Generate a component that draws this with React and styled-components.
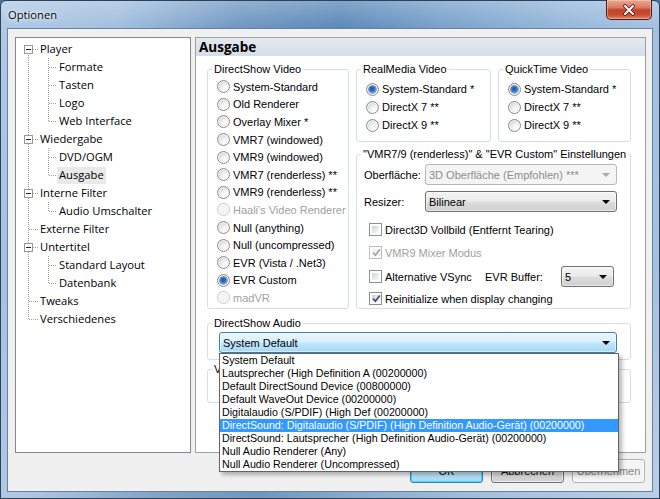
import React from "react";
import styled, { createGlobalStyle } from "styled-components";

const UI_FONT = `"Open Sans", "Noto Sans", sans-serif`;
const DLG_FONT = `"Liberation Sans", Arial, sans-serif`;

const GlobalStyle = createGlobalStyle`
  html, body {
    margin: 0;
    padding: 0;
  }
  body {
    width: 660px;
    height: 499px;
    overflow: hidden;
    background: #4f7298;
    font-family: ${DLG_FONT};
    font-size: 11px;
    color: #000;
  }
`;

const Window = styled.div`
  box-sizing: border-box;
  width: 660px;
  height: 499px;
  display: flex;
  flex-direction: column;
  padding: 0 6px 6px 6px;
  border: 1px solid #2c425c;
  border-radius: 6px 6px 0 0;
  background:
    linear-gradient(180deg, rgba(255, 255, 255, 0.28) 0, rgba(255, 255, 255, 0.05) 27px, rgba(255, 255, 255, 0) 55%, rgba(255, 255, 255, 0.16) 100%),
    linear-gradient(100deg, #abc7e4 0%, #9dbcdd 16%, #6993c0 32%, #5283b5 46%, #729dc9 60%, #94b6da 78%, #abc6e3 100%);
`;

const TitleBar = styled.div`
  height: 27px;
  display: flex;
  align-items: flex-start;
  justify-content: space-between;
`;

const Title = styled.span`
  margin: 6px 0 0 1px;
  font-family: ${UI_FONT};
  font-size: 11.2px;
  line-height: 16px;
  color: #000;
  text-shadow: 0 0 5px rgba(255, 255, 255, 0.95), 0 0 2px rgba(255, 255, 255, 0.9);
`;

const CloseButton = styled.div`
  box-sizing: border-box;
  width: 46px;
  height: 20px;
  margin: -1px 1px 0 0;
  display: flex;
  align-items: center;
  justify-content: center;
  border: 1px solid #4a1d16;
  border-top: none;
  border-radius: 0 0 5px 5px;
  background: linear-gradient(180deg, #e9a895 0%, #d87a62 40%, #c4442a 52%, #c5482c 75%, #df8266 100%);
  box-shadow: inset 0 0 0 1px rgba(255, 220, 200, 0.45);
`;

const Client = styled.div`
  flex: 1;
  display: flex;
  flex-direction: column;
  padding: 8px 6px 8px 7px;
  background: #f0f0f0;
  border: 1px solid #6a829e;
`;

const Body = styled.div`
  height: 416px;
  display: flex;
  gap: 4px;
`;

const Tree = styled.div`
  box-sizing: border-box;
  width: 176px;
  padding-top: 2px;
  border: 1px solid #828790;
  background: #fff;
  font-family: ${UI_FONT};
  font-size: 11.2px;
`;

const TreeRow = styled.div`
  height: 18px;
  display: flex;
  align-items: center;
`;

const TreeLabel = styled.span`
  height: 17px;
  line-height: 16px;
  padding: 0 2px;
  white-space: nowrap;
  background: ${(p) => (p.$selected ? "#e9e9e9" : "transparent")};
`;

const Panel = styled.div`
  box-sizing: border-box;
  flex: 1;
  display: flex;
  flex-direction: column;
  border: 1px solid #a0a0a0;
  background: #fff;
`;

const PageHeader = styled.div`
  height: 18px;
  padding-left: 3px;
  font-family: ${UI_FONT};
  font-weight: 700;
  font-size: 13.5px;
  line-height: 18px;
  background: linear-gradient(180deg, #e3e9f0 0%, #d5dee8 100%);
`;

const PageContent = styled.div`
  padding: 7px 14px 0 11px;
`;

const VideoGrid = styled.div`
  display: grid;
  grid-template-columns: 142px 135px 133px;
  grid-template-rows: 79px 161px;
  column-gap: 7px;
  row-gap: 6px;
`;

const Group = styled.fieldset`
  box-sizing: border-box;
  min-width: 0;
  margin: ${(p) => p.$mt || 0}px 0 0 0;
  padding: 0;
  height: ${(p) => (p.$h ? `${p.$h}px` : "auto")};
  grid-column: ${(p) => p.$col || "auto"};
  grid-row: ${(p) => p.$row || "auto"};
  border: 1px solid #d5dfe5;
  border-radius: 3px;
`;

const Legend = styled.legend`
  margin-left: 4px;
  padding: 0 2px;
  line-height: 13px;
  color: #000;
  white-space: nowrap;
`;

const RadioList = styled.div`
  display: flex;
  flex-direction: column;
  padding: ${(p) => p.$pt}px 0 0 9px;
`;

const Option = styled.div`
  height: ${(p) => p.$h}px;
  display: flex;
  align-items: center;
  gap: ${(p) => p.$gap || 3}px;
  white-space: nowrap;
  color: ${(p) => (p.$disabled ? "#a0a0a0" : "#000")};
`;

const RadioMark = styled.span`
  position: relative;
  flex: none;
  box-sizing: border-box;
  width: 13px;
  height: 13px;
  border-radius: 50%;
  border: 1px solid ${(p) => (p.$disabled ? "#c8c8c8" : "#8c8c8c")};
  background: ${(p) =>
    p.$disabled
      ? "#f4f4f4"
      : "radial-gradient(circle at 65% 70%, #ffffff 0, #f3f3f3 30%, #d6d6d6 75%, #c8c8c8 100%)"};
  box-shadow: inset 0 0 0 1px rgba(255, 255, 255, 0.7);

  &::after {
    content: "";
    display: ${(p) => (p.$checked ? "block" : "none")};
    position: absolute;
    left: 2px;
    top: 2px;
    width: 7px;
    height: 7px;
    border-radius: 50%;
    background: radial-gradient(circle at 45% 40%, #24549e 0, #2b68bf 35%, #5aa1e6 72%, #a3d0f6 100%);
    box-shadow: 0 0 0 0.5px #2a4f86;
  }
`;

const CheckMark = styled.span`
  flex: none;
  box-sizing: border-box;
  width: 13px;
  height: 13px;
  padding: 2px;
  border: 1px solid ${(p) => (p.$disabled ? "#bdbdbd" : "#8e8f8f")};
  background: #fff;
  display: flex;
`;

const CheckInner = styled.span`
  flex: 1;
  display: flex;
  align-items: center;
  justify-content: center;
  background: ${(p) =>
    p.$disabled ? "#f2f2f2" : "linear-gradient(135deg, #cdd1d6 0%, #e9eaec 55%, #f7f7f7 100%)"};
`;

const VmrBody = styled.div`
  display: flex;
  flex-direction: column;
  padding-left: 7px;
`;

const FieldRow = styled.div`
  margin-top: ${(p) => p.$mt}px;
  height: 21px;
  display: flex;
  align-items: center;
`;

const FieldLabel = styled.span`
  width: ${(p) => p.$w}px;
  flex: none;
  white-space: nowrap;
`;

const CheckRow = styled.div`
  margin: ${(p) => p.$mt}px 0 0 5px;
  height: 17px;
  display: flex;
  align-items: center;
  gap: 3px;
  white-space: nowrap;
  color: ${(p) => (p.$disabled ? "#a0a0a0" : "#000")};
`;

const InlineCheck = styled(CheckRow)`
  margin: 0 0 0 5px;
  width: 116px;
  flex: none;
`;

const Combo = styled.div`
  box-sizing: border-box;
  width: ${(p) => p.$w}px;
  height: 21px;
  flex: none;
  display: flex;
  align-items: center;
  justify-content: space-between;
  padding: 0 6px 0 3px;
  border-radius: 3px;
  white-space: nowrap;
  border: 1px solid ${(p) => (p.$disabled ? "#b5b9bd" : p.$focused ? "#3c7fb1" : "#707070")};
  color: ${(p) => (p.$disabled ? "#8c8c8c" : "#000")};
  background: ${(p) =>
    p.$disabled
      ? "#f4f4f4"
      : p.$focused
      ? "linear-gradient(180deg, #eaf6fd 0%, #d9f0fc 48%, #bee6fd 52%, #a7d9f5 100%)"
      : "linear-gradient(180deg, #f3f3f3 0%, #ebebeb 48%, #dddddd 52%, #cfcfcf 100%)"};
  box-shadow: inset 0 0 0 1px ${(p) => (p.$disabled ? "transparent" : "rgba(255, 255, 255, 0.55)")};
`;

const Arrow = styled.span`
  width: 0;
  height: 0;
  border-top: 4px solid ${(p) => (p.$disabled ? "#a8a8a8" : "#000")};
  border-left: 4px solid transparent;
  border-right: 4px solid transparent;
`;

const ComboWrap = styled.div`
  position: relative;
  margin: 2px 0 0 11px;
  width: 398px;
`;

const DropList = styled.div`
  position: absolute;
  z-index: 10;
  top: 100%;
  left: 0;
  width: 400px;
  box-sizing: border-box;
  border: 1px solid #646464;
  background: #fff;
  box-shadow: 3px 3px 4px rgba(0, 0, 0, 0.28);
  font-size: 10.7px;
`;

const DropItem = styled.div`
  height: 13px;
  line-height: 13px;
  padding-left: 2px;
  white-space: nowrap;
  color: ${(p) => (p.$selected ? "#fff" : "#000")};
  background: ${(p) => (p.$selected ? "#3399ff" : "transparent")};
`;

const ButtonRow = styled.div`
  margin-top: 6px;
  height: 24px;
  display: flex;
  justify-content: flex-end;
  gap: 8px;
  padding-right: 1px;
`;

const Button = styled.div`
  box-sizing: border-box;
  width: 73px;
  height: 24px;
  display: flex;
  align-items: center;
  justify-content: center;
  border-radius: 3px;
  border: 1px solid ${(p) => (p.$disabled ? "#adb2b5" : p.$default ? "#3c7fb1" : "#707070")};
  color: ${(p) => (p.$disabled ? "#838383" : "#000")};
  background: ${(p) =>
    p.$disabled
      ? "#f4f4f4"
      : p.$default
      ? "linear-gradient(180deg, #eaf6fd 0%, #d9f0fc 48%, #bee6fd 52%, #a7d9f5 100%)"
      : "linear-gradient(180deg, #f2f2f2 0%, #ebebeb 48%, #dddddd 52%, #cfcfcf 100%)"};
  box-shadow: inset 0 0 0 1px ${(p) => (p.$default ? "#48d8fb" : "rgba(255,255,255,0.6)")};
`;

const treeNodes = [
  { label: "Player", level: 0, expander: true, first: true },
  { label: "Formate", level: 1 },
  { label: "Tasten", level: 1 },
  { label: "Logo", level: 1 },
  { label: "Web Interface", level: 1, lastChild: true },
  { label: "Wiedergabe", level: 0, expander: true },
  { label: "DVD/OGM", level: 1 },
  { label: "Ausgabe", level: 1, lastChild: true, selected: true },
  { label: "Interne Filter", level: 0, expander: true },
  { label: "Audio Umschalter", level: 1, lastChild: true },
  { label: "Externe Filter", level: 0 },
  { label: "Untertitel", level: 0, expander: true },
  { label: "Standard Layout", level: 1 },
  { label: "Datenbank", level: 1, lastChild: true },
  { label: "Tweaks", level: 0 },
  { label: "Verschiedenes", level: 0, last: true },
];

const dsVideo = [
  { label: "System-Standard" },
  { label: "Old Renderer" },
  { label: "Overlay Mixer *" },
  { label: "VMR7 (windowed)" },
  { label: "VMR9 (windowed)" },
  { label: "VMR7 (renderless) **" },
  { label: "VMR9 (renderless) **" },
  { label: "Haali's Video Renderer", disabled: true },
  { label: "Null (anything)" },
  { label: "Null (uncompressed)" },
  { label: "EVR (Vista / .Net3)" },
  { label: "EVR Custom", checked: true },
  { label: "madVR", disabled: true },
];

const smallVideo = [
  { label: "System-Standard *", checked: true },
  { label: "DirectX 7 **" },
  { label: "DirectX 9 **" },
];

const audioDevices = [
  "System Default",
  "Lautsprecher (High Definition A (00200000)",
  "Default DirectSound Device (00800000)",
  "Default WaveOut Device (00200000)",
  "Digitalaudio (S/PDIF) (High Def (00200000)",
  "DirectSound: Digitalaudio (S/PDIF) (High Definition Audio-Gerät) (00200000)",
  "DirectSound: Lautsprecher (High Definition Audio-Gerät) (00200000)",
  "Null Audio Renderer (Any)",
  "Null Audio Renderer (Uncompressed)",
];

function TreeGutter({ node }) {
  const w = node.level === 0 ? 22 : 41;
  const dot = { stroke: "#a0a0a0", strokeWidth: 1, strokeDasharray: "1 1" };
  return (
    <svg width={w} height={18} shapeRendering="crispEdges" style={{ flex: "none" }}>
      <line x1={12.5} x2={12.5} y1={node.first ? 9 : 0} y2={node.last ? 10 : 18} {...dot} />
      {node.level === 0 && <line x1={node.expander ? 17 : 13} x2={22} y1={9.5} y2={9.5} {...dot} />}
      {node.level === 1 && (
        <>
          <line x1={32.5} x2={32.5} y1={0} y2={node.lastChild ? 10 : 18} {...dot} />
          <line x1={33} x2={41} y1={9.5} y2={9.5} {...dot} />
        </>
      )}
      {node.expander && (
        <g>
          <rect x={8.5} y={5.5} width={8} height={8} fill="#fff" stroke="#979797" />
          <line x1={10} x2={15} y1={9.5} y2={9.5} stroke="#222" />
        </g>
      )}
    </svg>
  );
}

function Radio({ item, h, gap }) {
  return (
    <Option $h={h} $gap={gap} $disabled={item.disabled}>
      <RadioMark $checked={item.checked} $disabled={item.disabled} />
      {item.label}
    </Option>
  );
}

function Check({ checked, disabled }) {
  return (
    <CheckMark $disabled={disabled}>
      <CheckInner $disabled={disabled}>
        {checked && (
          <svg width="9" height="9" viewBox="0 0 9 9">
            <path
              d="M1.2 4.6 L3.4 7.2 L7.8 1.4"
              fill="none"
              stroke={disabled ? "#a6a6a6" : "#3b4f86"}
              strokeWidth="1.7"
            />
          </svg>
        )}
      </CheckInner>
    </CheckMark>
  );
}

export default function App() {
  return (
    <>
      <GlobalStyle />
      <Window>
        <TitleBar>
          <Title>Optionen</Title>
          <CloseButton>
            <svg width="14" height="12" viewBox="0 0 14 12">
              <path d="M3 2 L11 10 M11 2 L3 10" stroke="#5a1a10" strokeWidth="3.6" strokeLinecap="round" />
              <path d="M3 2 L11 10 M11 2 L3 10" stroke="#fff" strokeWidth="2" strokeLinecap="round" />
            </svg>
          </CloseButton>
        </TitleBar>
        <Client>
          <Body>
            <Tree>
              {treeNodes.map((node) => (
                <TreeRow key={node.label}>
                  <TreeGutter node={node} />
                  <TreeLabel $selected={node.selected}>{node.label}</TreeLabel>
                </TreeRow>
              ))}
            </Tree>
            <Panel>
              <PageHeader>Ausgabe</PageHeader>
              <PageContent>
                <VideoGrid>
                  <Group $col="1" $row="1 / span 2">
                    <Legend>DirectShow Video</Legend>
                    <RadioList $pt={2}>
                      {dsVideo.map((item) => (
                        <Radio key={item.label} item={item} h={17.6} />
                      ))}
                    </RadioList>
                  </Group>
                  <Group $col="2" $row="1">
                    <Legend>RealMedia Video</Legend>
                    <RadioList $pt={4}>
                      {smallVideo.map((item) => (
                        <Radio key={item.label} item={item} h={18} />
                      ))}
                    </RadioList>
                  </Group>
                  <Group $col="3" $row="1">
                    <Legend>QuickTime Video</Legend>
                    <RadioList $pt={4}>
                      {smallVideo.map((item) => (
                        <Radio key={item.label} item={item} h={18} />
                      ))}
                    </RadioList>
                  </Group>
                  <Group $col="2 / span 2" $row="2">
                    <Legend>"VMR7/9 (renderless)" &amp; "EVR Custom" Einstellungen</Legend>
                    <VmrBody>
                      <FieldRow $mt={3}>
                        <FieldLabel $w={61}>Oberfläche:</FieldLabel>
                        <Combo $w={192} $disabled>
                          3D Oberfläche (Empfohlen) ***
                          <Arrow $disabled />
                        </Combo>
                      </FieldRow>
                      <FieldRow $mt={6}>
                        <FieldLabel $w={61}>Resizer:</FieldLabel>
                        <Combo $w={192}>
                          Bilinear
                          <Arrow />
                        </Combo>
                      </FieldRow>
                      <CheckRow $mt={9}>
                        <Check />
                        Direct3D Vollbild (Entfernt Tearing)
                      </CheckRow>
                      <CheckRow $mt={6} $disabled>
                        <Check checked disabled />
                        VMR9 Mixer Modus
                      </CheckRow>
                      <FieldRow $mt={5}>
                        <InlineCheck>
                          <Check />
                          Alternative VSync
                        </InlineCheck>
                        <FieldLabel $w={76}>EVR Buffer:</FieldLabel>
                        <Combo $w={53}>
                          5
                          <Arrow />
                        </Combo>
                      </FieldRow>
                      <CheckRow $mt={3}>
                        <Check checked />
                        Reinitialize when display changing
                      </CheckRow>
                    </VmrBody>
                  </Group>
                </VideoGrid>
                <Group $mt={8} $h={43}>
                  <Legend>DirectShow Audio</Legend>
                  <ComboWrap>
                    <Combo $w={398} $focused>
                      System Default
                      <Arrow />
                    </Combo>
                    <DropList>
                      {audioDevices.map((name, i) => (
                        <DropItem key={name} $selected={i === 5}>
                          {name}
                        </DropItem>
                      ))}
                    </DropList>
                  </ComboWrap>
                </Group>
                <Group $mt={3} $h={40}>
                  <Legend>V</Legend>
                </Group>
              </PageContent>
            </Panel>
          </Body>
          <ButtonRow>
            <Button $default>OK</Button>
            <Button>Abbrechen</Button>
            <Button $disabled>Übernehmen</Button>
          </ButtonRow>
        </Client>
      </Window>
    </>
  );
}
